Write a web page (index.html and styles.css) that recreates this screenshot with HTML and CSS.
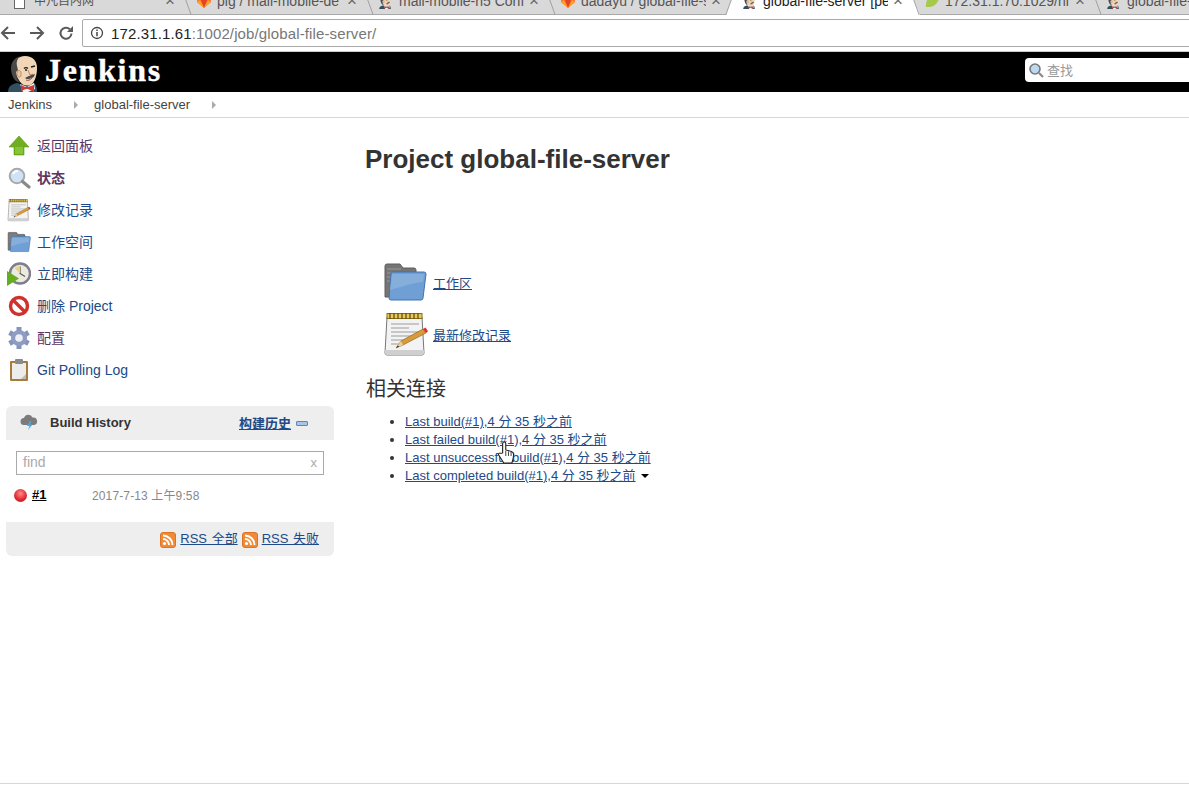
FILE: index.html
```html
<!DOCTYPE html>
<html lang="zh">
<head>
<meta charset="utf-8">
<title>global-file-server</title>
<link rel="stylesheet" href="styles.css">
</head>
<body>
<svg class="defs" width="0" height="0" aria-hidden="true">
  <defs>
    <symbol id="butler" viewBox="0 0 36 40">
      <path d="M1 40c0-5 3-8 9-9l9 3 8-3c2 1 3 5 3 9z" fill="#335061"/>
      <path d="M13 32l7 3 7-4 1 6-7 3h-5z" fill="#f4f4f4"/>
      <path d="M18 35l-4-2v6l5-2 2 0 6 3v-7l-6 2z" fill="#d33833"/>
      <path d="M7 17C6 9 11 4 18 4c8 0 12 5 12 12 0 7-2 13-5 16-3 2-7 2-10 0-3-3-6-8-8-15z" fill="#f0d6b7"/>
      <path d="M6 25C3 18 3 10 9 6l4-2c-3 3-4 7-3 10l1 4-2 2 1 6 3 5c-3-1-6-3-7-6z" fill="#49494a"/>
      <path d="M10 20c1-2 3-2 4 0l0 4c-1 2-3 1-4-1z" fill="#eac6a2" stroke="#9a6a45" stroke-width=".6"/>
      <path d="M17 16.500c1-1 3-1 4 0M24 15l4-1" stroke="#231f20" stroke-width="1.300" fill="none"/>
      <circle cx="19" cy="18" r="1" fill="#231f20"/>
      <path d="M21 18l2 5 3-1" stroke="#b98a62" fill="none"/>
      <path d="M18 26c3-2 6-3 10-4-1 3-2 4-4 4l-2 1c-2 0-3 0-4-1z" fill="#49494a"/>
      <path d="M19 28c2 1 4 0 6-2" stroke="#a8473c" fill="none"/>
    </symbol>
    <symbol id="gitlab" viewBox="0 0 16 16">
      <path d="M8 15L1 9l1-7 2 5h8l2-5 1 7z" fill="#fc6d26"/>
      <path d="M8 15L5 7h6z" fill="#e24329"/>
      <path d="M8 15L1 9l3-2zM8 15l7-6-3-2z" fill="#fca326"/>
    </symbol>
    <symbol id="rss" viewBox="0 0 16 16">
      <rect x=".5" y=".5" width="15" height="15" rx="2.5" fill="#f08a34" stroke="#d8752a"/>
      <circle cx="4.5" cy="11.5" r="1.6" fill="#fff"/>
      <path d="M3 7a6 6 0 0 1 6 6M3 3.500A9.500 9.500 0 0 1 12.500 13" fill="none" stroke="#fff" stroke-width="1.900"/>
    </symbol>
    <symbol id="folder" viewBox="0 0 44 38">
      <path d="M2 34V3a2 2 0 0 1 2-2h13l3 4h11a2 2 0 0 1 2 2v27z" fill="#757575" stroke="#5f5f5f"/>
      <path d="M4 6h14M4 10h14M4 14h10M4 18h8" stroke="#9a9a9a"/>
      <path d="M6 35l2-24a2 2 0 0 1 2-2h31a2 2 0 0 1 2 2l-3 24a2 2 0 0 1-2 2H8a2 2 0 0 1-2-2z" fill="#6f9fd4" stroke="#3f74b1"/>
      <path d="M9 11h32l-1 8C28 20 18 24 7 27z" fill="#85aedb"/>
    </symbol>
    <symbol id="notepad" viewBox="0 0 46 44">
      <path d="M2 41l2-36h35l2 36a2 2 0 0 1-2 2H4a2 2 0 0 1-2-2z" fill="#f3f3f3" stroke="#777"/>
      <path d="M2 38h39v3a2 2 0 0 1-2 2H4a2 2 0 0 1-2-2z" fill="#cfcfcf"/>
      <rect x="4" y="1.500" width="35" height="5" fill="#e8c85a" stroke="#8a6f1a"/>
      <path d="M7 1v6M11 1v6M15 1v6M19 1v6M23 1v6M27 1v6M31 1v6M35 1v6" stroke="#5c4a10" stroke-width="1.200"/>
      <path d="M8 12h28M8 16h18M8 20h28M8 24h24M8 28h14M8 32h10" stroke="#9b9b9b"/>
      <path d="M13 36l5-7 22-12 3 4-23 12z" fill="#d99a3a" stroke="#8a5a14" stroke-width=".6"/>
      <path d="M13 36l5-7 2 4z" fill="#eccfa0"/>
      <path d="M13 36l1.800-2.500 1.400 1.200z" fill="#333"/>
      <path d="M40 17l2.500-1.400 2.500 3.600L43 21z" fill="#d8322a"/>
    </symbol>
  </defs>
</svg>

<div class="tabstrip">
  <div class="tab tab-first"><span class="fav-page"></span><span class="tab-title">中凡自内网</span><span class="tab-x">×</span></div>
  <div class="tab"><svg class="fav"><use href="#gitlab"/></svg><span class="tab-title">pig / mall-mobile-de</span><span class="tab-x">×</span></div>
  <div class="tab"><svg class="fav"><use href="#butler"/></svg><span class="tab-title">mall-mobile-h5 Conf</span><span class="tab-x">×</span></div>
  <div class="tab"><svg class="fav"><use href="#gitlab"/></svg><span class="tab-title">dadayu / global-file-s</span><span class="tab-x">×</span></div>
  <div class="tab tab-active"><svg class="fav"><use href="#butler"/></svg><span class="tab-title">global-file-server [per</span><span class="tab-x">×</span></div>
  <div class="tab"><svg class="fav" viewBox="0 0 16 16"><path d="M2 14C1 6 7 1 15 0c1 8-3 15-13 14z" fill="#a5c94a"/></svg><span class="tab-title">172.31.1.70:1029/ni</span><span class="tab-x">×</span></div>
  <div class="tab"><svg class="fav"><use href="#butler"/></svg><span class="tab-title">global-file-s</span></div>
</div>

<div class="toolbar">
  <svg class="nav-icon" viewBox="0 0 16 16"><path d="M15 8H2M8 2L2 8l6 6" fill="none" stroke="#5a5a5a" stroke-width="2"/></svg>
  <svg class="nav-icon" viewBox="0 0 16 16"><path d="M1 8h13M8 2l6 6-6 6" fill="none" stroke="#5a5a5a" stroke-width="2"/></svg>
  <svg class="nav-icon" viewBox="0 0 16 16"><path d="M13.500 8.500a5.500 5.500 0 1 1-1.600-4.200" fill="none" stroke="#5a5a5a" stroke-width="2"/><path d="M15 1v6H9z" fill="#5a5a5a"/></svg>
  <div class="omnibox">
    <svg class="info" viewBox="0 0 14 14"><circle cx="7" cy="7" r="5.500" fill="none" stroke="#444" stroke-width="1.300"/><path d="M7 6v4.200M7 3.500v1.500" stroke="#444" stroke-width="1.500"/></svg>
    <span class="url-host">172.31.1.61</span><span class="url-rest">:1002/job/global-file-server/</span>
  </div>
</div>

<header class="jheader">
  <svg class="jlogo"><use href="#butler"/></svg>
  <span class="jname">Jenkins</span>
  <div class="jsearch">
    <svg class="jsearch-icon" viewBox="0 0 16 16"><circle cx="7" cy="7" r="5" fill="#bcd9f2" stroke="#777" stroke-width="1.600"/><path d="M11 11l4 4" stroke="#888" stroke-width="2.200"/></svg>
    <span class="jsearch-text">查找</span>
  </div>
</header>

<nav class="crumbs">
  <span class="crumb">Jenkins</span><span class="crumb-arrow"></span>
  <span class="crumb">global-file-server</span><span class="crumb-arrow"></span>
</nav>

<div class="layout">
  <aside class="side">
    <ul class="tasks">
      <li class="task visited"><svg class="task-icon" viewBox="0 0 24 24"><path d="M12 2L22 13h-5v8H7v-8H2z" fill="#6fae1f" stroke="#5b9a17" stroke-width=".6"/><path d="M8 13h8v7H8z" fill="#86c437"/></svg><span class="task-label">返回面板</span></li>
      <li class="task visited bold"><svg class="task-icon" viewBox="0 0 24 24"><circle cx="10" cy="10" r="7.300" fill="#cfe2f6" stroke="#a9a9a9" stroke-width="2"/><path d="M6 8a5 5 0 0 1 5-3" stroke="#fff" stroke-width="2" fill="none"/><path d="M15.500 15.500L22 21" stroke="#8a8a8a" stroke-width="3.200" stroke-linecap="round"/></svg><span class="task-label">状态</span></li>
      <li class="task"><svg class="task-icon" viewBox="0 0 46 44"><use href="#notepad"/></svg><span class="task-label">修改记录</span></li>
      <li class="task"><svg class="task-icon" viewBox="0 0 44 38"><use href="#folder"/></svg><span class="task-label">工作空间</span></li>
      <li class="task"><svg class="task-icon" viewBox="0 0 24 24"><circle cx="13" cy="11.500" r="10" fill="#ece9df" stroke="#7f7d8e" stroke-width="2.400"/><path d="M13 4.500v7l5 3" fill="none" stroke="#555" stroke-width="1.200"/><path d="M7.500 6l5.500 5.500V3.500z" fill="#e8d384"/><path d="M0 9l12 7.500L0 24z" fill="#63ad1e"/></svg><span class="task-label">立即构建</span></li>
      <li class="task"><svg class="task-icon" viewBox="0 0 24 24"><circle cx="12" cy="12" r="8.500" fill="#fff" stroke="#d0312d" stroke-width="3.400"/><path d="M6 6l12 12" stroke="#d0312d" stroke-width="3.400"/></svg><span class="task-label">删除 Project</span></li>
      <li class="task visited"><svg class="task-icon" viewBox="0 0 24 24"><g stroke="#8794ba" stroke-width="5"><path d="M12 1v22"/><path d="M2.500 6.500l19 11"/><path d="M2.500 17.500l19-11"/></g><circle cx="12" cy="12" r="8" fill="#8f9cc2"/><circle cx="12" cy="12" r="3.800" fill="#eef0f5"/></svg><span class="task-label">配置</span></li>
      <li class="task"><svg class="task-icon" viewBox="0 0 24 24"><rect x="3" y="3" width="18" height="20" fill="#a87a3c" rx="1"/><rect x="5" y="5" width="14" height="16" fill="#ececec"/><path d="M14 21l5-5v5z" fill="#bbb"/><rect x="8" y="1" width="8" height="5" rx="1" fill="#8a8a8a"/></svg>Git Polling Log</li>
    </ul>

    <section class="history">
      <div class="history-head">
        <svg class="cloud" viewBox="0 0 18 18"><path d="M4 12a3.500 3.500 0 0 1 0-7 4.500 4.500 0 0 1 8.500-.5A3.800 3.800 0 0 1 14 12z" fill="#7b7b7b"/><path d="M10 8l-3 5h2.500L8 17l4.500-5.500H10l1.500-3.500z" fill="#4ca7e0"/></svg>
        <span class="history-title">Build History</span>
        <a class="history-trend" href="#">构建历史</a>
        <span class="collapse"></span>
      </div>
      <div class="history-filter">
        <div class="find-box"><span class="find-text">find</span><span class="find-x">x</span></div>
      </div>
      <div class="build-row">
        <span class="ball"></span>
        <a class="build-link" href="#">#1</a>
        <span class="build-time">2017-7-13 上午9:58</span>
      </div>
      <div class="history-foot">
        <svg class="rss"><use href="#rss"/></svg><a class="rss-link" href="#">RSS 全部</a>
        <svg class="rss"><use href="#rss"/></svg><a class="rss-link" href="#">RSS 失败</a>
      </div>
    </section>
  </aside>

  <main class="main">
    <h1 class="title">Project global-file-server</h1>
    <div class="big-links">
      <div class="big-link"><svg class="big-folder"><use href="#folder"/></svg><a href="#">工作区</a></div>
      <div class="big-link"><svg class="big-note"><use href="#notepad"/></svg><a href="#">最新修改记录</a></div>
    </div>
    <h2 class="subtitle">相关连接</h2>
    <ul class="permalinks">
      <li><a href="#">Last build(#1),4 分 35 秒之前</a></li>
      <li class="hover-row"><a href="#">Last failed build(#1),4 分 35 秒之前</a>
        <svg class="hand" viewBox="0 0 16 23" preserveAspectRatio="none"><path d="M5 12V2.500a1.400 1.400 0 0 1 2.800 0V9l5 1.500c1.500.5 2 1.500 2 3 0 2.500-.5 5-1.500 8.500H6L1.500 14c-1-1.500 1-2.500 2-1.500z" fill="#fff" stroke="#222" stroke-width="1"/><path d="M7.800 10v5M10.200 10.500V15M12.500 11v4" stroke="#222" stroke-width=".8"/></svg>
      </li>
      <li><a href="#">Last unsuccessful build(#1),4 分 35 秒之前</a></li>
      <li><a href="#">Last completed build(#1),4 分 35 秒之前</a><span class="caret"></span></li>
    </ul>
  </main>
</div>

<footer class="foot"></footer>
</body>
</html>
```
FILE: styles.css
```css
* { box-sizing: border-box; }
html, body { margin: 0; padding: 0; height: 795px; overflow: hidden; }
body {
  font-family: "Liberation Sans", "Noto Sans CJK SC", sans-serif;
  font-size: 13px;
  color: #333;
  background: #fff;
  display: flex;
  flex-direction: column;
}
a { color: #204a87; }
ul { margin: 0; padding: 0; }
.defs { position: absolute; }

/* browser chrome */
.tabstrip {
  height: 15px;
  flex: none;
  display: flex;
  overflow: hidden;
  isolation: isolate;
  background: linear-gradient(#d9d9d9 14px, #a9a9a9 14px);
  padding-left: 4px;
}
.tab {
  position: relative;
  width: 182px;
  flex: none;
  height: 15px;
  display: flex;
  align-items: flex-start;
  gap: 5px;
  padding: 0 11px 0 10px;
  color: #555;
  font-size: 14px;
}
.tab::before {
  content: "";
  position: absolute;
  left: 2px;
  top: 0;
  width: 1px;
  height: 15px;
  background: #a0a0a0;
  transform: skewX(20deg);
}
.tab-first { font-size: 12px; }
.tab-first::before { display: none; }
.tab-active {
  color: #222;
  width: 194px;
  margin: 0 -6px;
  padding: 0 17px 0 16px;
}
.tab-active::before {
  left: 0;
  width: 194px;
  background: #fff;
  transform: none;
  z-index: -1;
  clip-path: polygon(0 100%, 5px 0, 188px 0, 194px 100%);
}
.tab-active::after {
  content: "";
  position: absolute;
  left: 2px;
  top: 0;
  width: 1px;
  height: 15px;
  background: #a0a0a0;
  transform: skewX(-20deg);
}
.fav { width: 16px; height: 16px; flex: none; margin-top: -7px; }
.fav-page { width: 11px; height: 14px; margin-top: -5px; border: 1px solid #666; background: #fff; flex: none; margin-right: 4px; }
.tab-title { flex: 1; min-width: 0; white-space: nowrap; overflow: hidden; margin-top: -8px; line-height: 18px; }
.tab-x { flex: none; margin-top: -8px; color: #666; font-size: 17px; line-height: 18px; }

.toolbar {
  height: 32px;
  flex: none;
  display: flex;
  align-items: center;
  padding-top: 4px;
  background: #fff;
}
.nav-icon { width: 16px; height: 16px; flex: none; margin-right: 13px; }
.omnibox {
  flex: 1;
  height: 28px;
  margin-left: -5px;
  margin-right: -4px;
  border: 1px solid #a9a9a9;
  border-radius: 2px 0 0 2px;
  display: flex;
  align-items: center;
  padding-left: 7px;
  font-size: 15px;
  letter-spacing: .13px;
}
.info { width: 14px; height: 14px; margin-right: 7px; }
.url-host { color: #222; }
.url-rest { color: #777; }

/* Jenkins header */
.jheader {
  margin-top: 4px;
  height: 41px;
  flex: none;
  background: #000;
  border-top: 1px solid #ccc;
  display: flex;
  align-items: flex-start;
  overflow: hidden;
}
.jlogo { width: 36px; height: 40px; margin-left: 7px; flex: none; }
.jname {
  margin-left: 2px;
  font-family: "Liberation Serif", serif;
  font-weight: 700;
  font-size: 32px;
  line-height: 37px;
  color: #fff;
  letter-spacing: 1.700px;
  -webkit-text-stroke: .4px #fff;
}
.jsearch {
  margin-left: auto;
  margin-top: 6px;
  width: 164px;
  height: 24px;
  background: #fff;
  border-radius: 4px 0 0 4px;
  display: flex;
  align-items: center;
  padding-left: 3px;
  gap: 3px;
  flex: none;
}
.jsearch-icon { width: 16px; height: 16px; }
.jsearch-text { color: #999; font-size: 13px; margin-bottom: 2px; }

.crumbs {
  height: 26px;
  flex: none;
  display: flex;
  align-items: center;
  padding-left: 8px;
  border-bottom: 1px solid #d8d8d8;
  font-size: 13px;
  color: #444;
}
.crumb-arrow {
  width: 0;
  height: 0;
  margin: 0 16px 0 22px;
  border-left: 4px solid #aaa;
  border-top: 4px solid transparent;
  border-bottom: 4px solid transparent;
}

/* layout */
.layout { flex: 1; display: flex; min-height: 0; }
.side { width: 334px; flex: none; padding: 12px 0 0 6px; }
.tasks { list-style: none; }
.task {
  height: 32px;
  display: flex;
  align-items: center;
  gap: 6px;
  font-size: 14px;
  color: #204a87;
  padding-left: 1px;
}
.task-label { margin-bottom: 2px; }
.task.visited { color: #5c3566; }
.task.bold { font-weight: 700; }
.task-icon { width: 24px; height: 24px; flex: none; }

.history { margin-top: 20px; font-size: 12px; }
.history-head {
  height: 34px;
  display: flex;
  align-items: center;
  background: #eee;
  border-radius: 6px 6px 0 0;
  padding: 0 0 2px 14px;
}
.cloud { width: 18px; height: 18px; flex: none; }
.history-title { margin-left: 12px; font-weight: 700; font-size: 13px; color: #333; }
.history-trend { margin-left: auto; font-weight: 700; font-size: 13px; }
.collapse { width: 12px; height: 5px; margin: 3px 26px 0 5px; background: #a9c4e4; border: 1px solid #5c87b8; border-radius: 1px; }
.history-filter { padding: 11px 10px 0; }
.find-box {
  height: 24px;
  border: 1px solid #aaa;
  display: flex;
  align-items: center;
  justify-content: space-between;
  padding: 0 6px 2px;
  color: #aaa;
  font-size: 14px;
}
.find-x { font-size: 13px; }
.build-row {
  height: 47px;
  display: flex;
  align-items: flex-start;
  padding: 11px 0 0 8px;
}
.ball {
  width: 13px;
  height: 13px;
  margin-top: 3px;
  border-radius: 50%;
  background: radial-gradient(circle at 50% 35%, #ff8a8a, #e0242c 60%, #b51a20);
  flex: none;
}
.build-link { margin-left: 5px; margin-top: 1px; font-weight: 700; color: #000; font-size: 13px; width: 60px; }
.build-time { color: #888; font-size: 12px; letter-spacing: .13px; }
.history-foot {
  height: 34px;
  background: #eee;
  border-radius: 0 0 6px 6px;
  display: flex;
  align-items: center;
  justify-content: flex-end;
  padding: 0 15px 3px 0;
  font-size: 13px;
}
.rss { width: 16px; height: 16px; margin: 5px 4px 0 4px; flex: none; }
.rss-link { word-spacing: 1px; }

/* main */
.main { flex: 1; padding: 0 0 0 31px; }
.title { margin: 26px 0 0; font-size: 26px; line-height: 30px; font-weight: 700; color: #333; }
.big-links { margin-top: 82px; padding-left: 18px; }
.big-link { height: 52px; display: flex; align-items: center; font-size: 13px; }
.big-folder { width: 44px; height: 38px; margin-right: 6px; flex: none; }
.big-note { width: 46px; height: 44px; margin-right: 4px; flex: none; }
.subtitle { margin: 16px 0 0 1px; font-size: 20px; line-height: 27px; font-weight: 400; color: #333; }
.permalinks { margin-top: 10px; padding-left: 40px; font-size: 13px; line-height: 18px; }
.hover-row { position: relative; }
.hand { position: absolute; left: 92px; top: 10px; width: 18px; height: 23px; }
.caret {
  display: inline-block;
  width: 0;
  height: 0;
  margin-left: 5px;
  vertical-align: 2px;
  border-top: 4px solid #000;
  border-left: 4px solid transparent;
  border-right: 4px solid transparent;
}
.foot { height: 12px; flex: none; border-top: 1px solid #d8d8d8; }
```
